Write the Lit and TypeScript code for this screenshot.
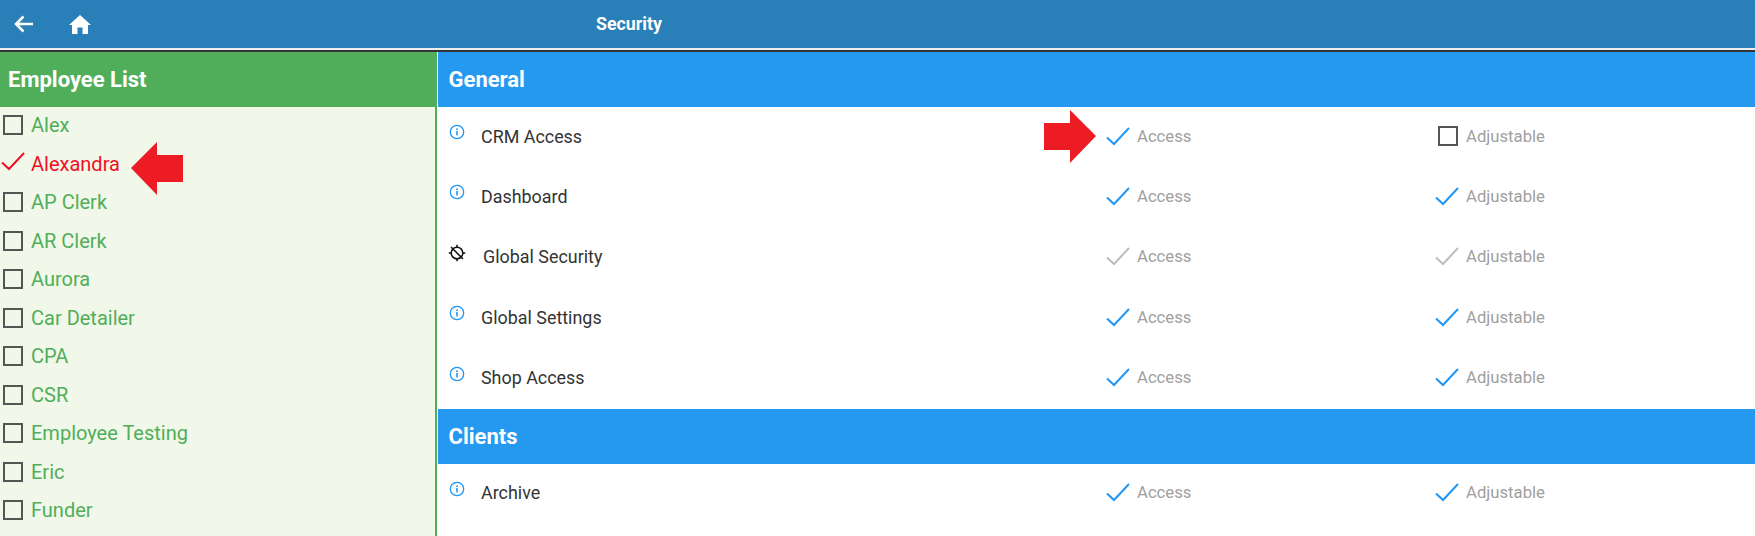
import { LitElement, html, css } from "lit";
import { customElement } from "lit/decorators.js";

const employees = ["Alex", "Alexandra", "AP Clerk", "AR Clerk", "Aurora", "Car Detailer", "CPA", "CSR", "Employee Testing", "Eric", "Funder"];
type Row = { name: string; icon: "info" | "off"; access: string; adjust: string };
const general: Row[] = [
  { name: "CRM Access", icon: "info", access: "on", adjust: "box" },
  { name: "Dashboard", icon: "info", access: "on", adjust: "on" },
  { name: "Global Security", icon: "off", access: "dim", adjust: "dim" },
  { name: "Global Settings", icon: "info", access: "on", adjust: "on" },
  { name: "Shop Access", icon: "info", access: "on", adjust: "on" },
];
const clients: Row[] = [{ name: "Archive", icon: "info", access: "on", adjust: "on" }];

const check = (cls: string) => html`<svg class="check ${cls}" viewBox="0 0 24 19" width="24" height="19"><path d="M1 10.5 L8 17 L23 1" fill="none" stroke="currentColor" stroke-width="2"/></svg>`;
const box = () => html`<span class="box"></span>`;
const mark = (k: string) => (k === "box" ? box() : check(k));
const info = html`<svg class="ic" viewBox="0 0 16 16" width="16" height="16"><circle cx="8" cy="8" r="6.7" fill="none" stroke="#2196f3" stroke-width="1.3"/><rect x="7.2" y="7" width="1.6" height="4.4" fill="#2196f3"/><rect x="7.2" y="4.4" width="1.6" height="1.6" fill="#2196f3"/></svg>`;
const off = html`<svg class="ic off" viewBox="0 0 18 18" width="18" height="18" fill="none" stroke="#111" stroke-width="1.5"><circle cx="9" cy="9" r="5.8"/><path d="M3 3 L15 15 M9 .8V3.2 M9 14.8V17.2 M.8 9H3.2 M14.8 9H17.2"/></svg>`;
const arrow = (cls: string, pts: string) => html`<svg class="arrow ${cls}" viewBox="0 0 52 53" width="52" height="53"><polygon points=${pts} fill="#ed1c24"/></svg>`;

@customElement("app-root")
export class AppRoot extends LitElement {
  static styles = css`
    :host { display: block; width: 1755px; height: 536px; overflow: hidden; position: relative; font-family: Roboto, sans-serif; background: #fff; }
    .top { height: 48px; background: #2980b9; display: flex; align-items: center; color: #fff; position: relative; }
    .back { margin-left: 14px; }
    .home { margin-left: 35px; }
    .title { position: absolute; left: 596px; top: 14px; font-size: 17.8px; font-weight: 700; line-height: 20px; }
    .rule { height: 2px; background: #eee; border-bottom: 2px solid #333; box-sizing: content-box; }
    .main { display: flex; height: 484px; }
    .left { width: 435px; flex: none; background: #f1f8e9; border-right: 2px solid #52ae5c; overflow: hidden; }
    .lhead { height: 55px; margin-right: -2px; background: #50ae5a; color: #fff; font-size: 22px; font-weight: 700; display: flex; align-items: center; padding-left: 8px; }
    .emp { height: 38.5px; display: flex; align-items: center; color: #50ae5a; font-size: 20px; padding-left: 3px; position: relative; top: -1px; }
    .emp.sel { color: #f00f25; }
    .emp .mk { width: 28px; flex: none; display: flex; align-items: center; }
    .box { display: block; width: 20px; height: 20px; box-sizing: border-box; border: 2px solid #555; }
    .emp .sel-check { color: #f00f25; margin-left: -2px; }
    .right { flex: 1; padding-left: 1px; }
    .rhead { height: 55px; background: #2598f0; color: #fff; font-size: 22px; font-weight: 700; display: flex; align-items: center; padding-left: 10.5px; }
    .row { height: 60.4px; box-sizing: border-box; padding-bottom: 2.4px; display: grid; grid-template-columns: 667px 329px 1fr; align-items: center; font-size: 16.7px; color: #333; }
    .name { display: flex; align-items: center; padding-left: 11px; font-size: 17.9px; }
    .ic { flex: none; margin-right: 16px; margin-top: -8px; }
    .ic.off { margin-left: -1px; margin-right: 17px; }
    .opt { display: flex; align-items: center; color: #a0a0a0; }
    .opt .lab { margin-left: 7px; }
    .opt .mkw { width: 25px; display: flex; justify-content: center; }
    .opt .box { position: relative; left: 1px; }
    .check.on { color: #2196f3; }
    .check.dim { color: #bdbdbd; }
    .arrow { position: absolute; }
    .a1 { left: 131px; top: 142px; }
    .a2 { left: 1044px; top: 110px; }
  `;

  private renderRows(rows: Row[]) {
    return rows.map(
      (r) => html`<div class="row">
        <div class="name">${r.icon === "info" ? info : off}<span>${r.name}</span></div>
        <div class="opt"><span class="mkw">${mark(r.access)}</span><span class="lab">Access</span></div>
        <div class="opt"><span class="mkw">${mark(r.adjust)}</span><span class="lab">Adjustable</span></div>
      </div>`
    );
  }

  render() {
    return html`
      <div class="top">
        <svg class="back" viewBox="0 0 20 18" width="20" height="18"><path d="M19 9H2.5 M9.5 1.5 L2 9 L9.5 16.5" fill="none" stroke="#fff" stroke-width="2.5"/></svg>
        <svg class="home" viewBox="0 0 22 19" width="22" height="19"><path d="M11 0 L22 10H19V19H13.5V12.5H8.5V19H3V10H0Z" fill="#fff"/></svg>
        <div class="title">Security</div>
      </div>
      <div class="rule"></div>
      <div class="main">
        <div class="left">
          <div class="lhead">Employee List</div>
          ${employees.map((e) => html`<div class="emp ${e === "Alexandra" ? "sel" : ""}"><span class="mk">${e === "Alexandra" ? html`<span class="sel-check">${check("")}</span>` : box()}</span><span>${e}</span></div>`)}
        </div>
        <div class="right">
          <div class="rhead">General</div>
          ${this.renderRows(general)}
          <div class="rhead">Clients</div>
          ${this.renderRows(clients)}
        </div>
      </div>
      ${arrow("a1", "0,26 26,0 26,13 52,13 52,40 26,40 26,53")}
      ${arrow("a2", "0,13 26,13 26,0 52,26 26,53 26,40 0,40")}
    `;
  }
}
